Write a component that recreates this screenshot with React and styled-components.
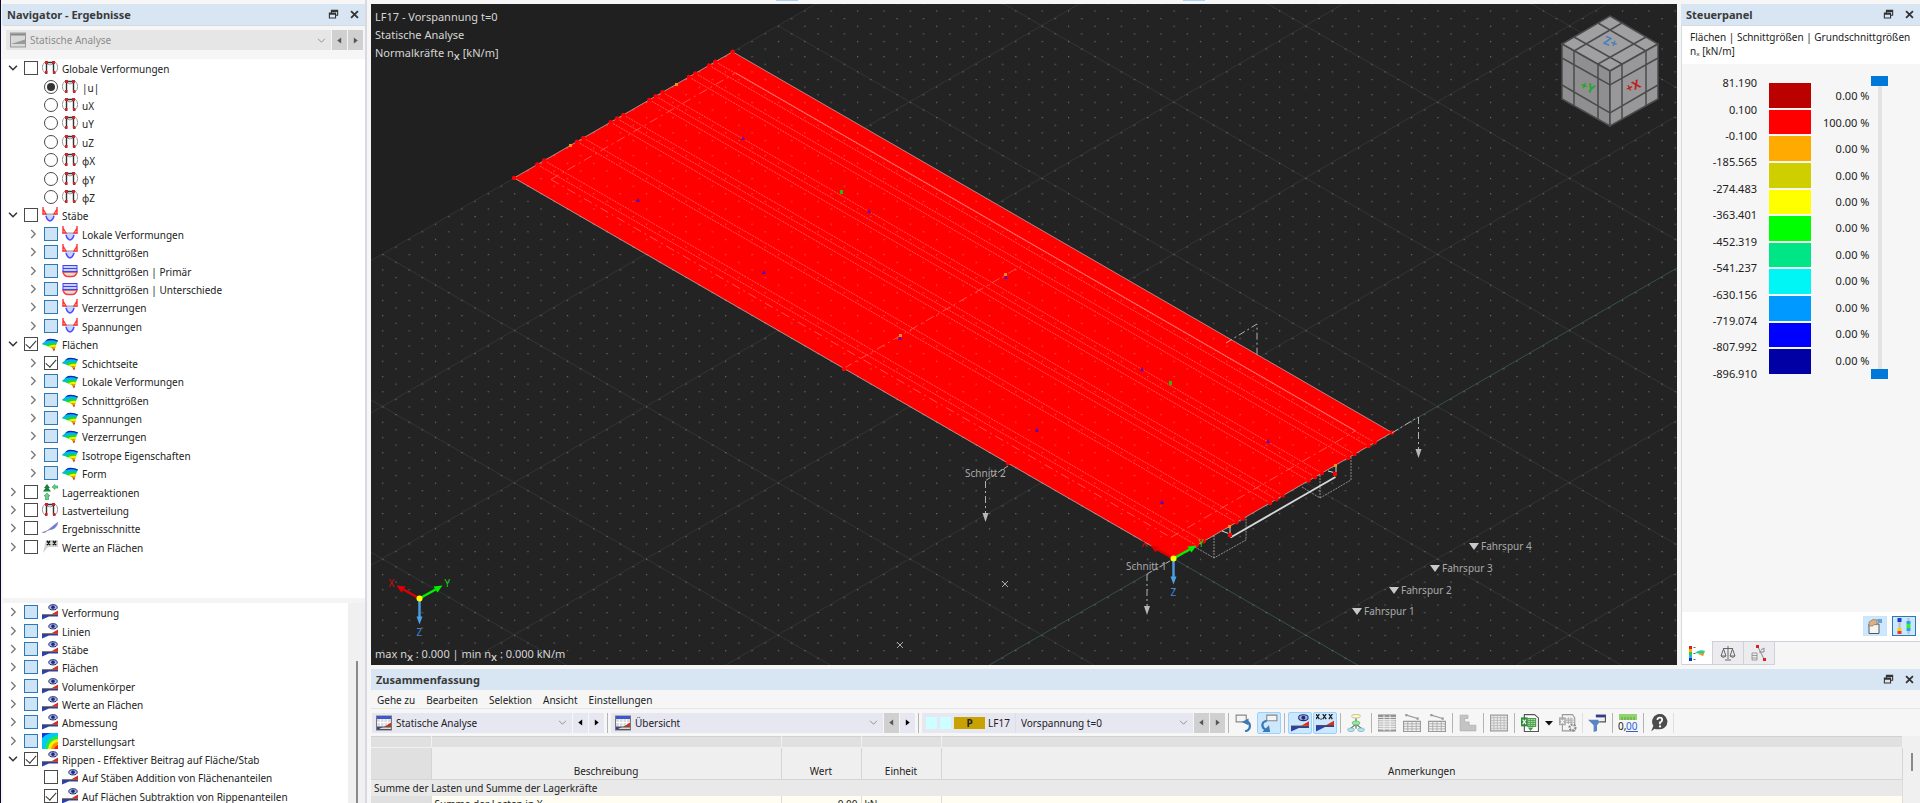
import React from "react";
import styled, { createGlobalStyle, css } from "styled-components";

const GlobalStyle = createGlobalStyle`
* {
box-sizing: border-box;
}
body {
margin: 0;
overflow: hidden;
background: #f6f6f6;
color: #222;
font-family: "Noto Sans", "Open Sans", sans-serif;
font-size: 10px;
line-height: 14px;
}
button, select, input {
font: inherit;
color: inherit;
margin: 0;
}
`;

const StyledWindow = styled.div`
display: flex;
height: 100vh;
border-left: 1px solid #0b0b2e;
`;
const StyledNavigator = styled.aside`
display: flex;
flex-direction: column;
width: 366px;
flex: none;
padding-top: 4px;
padding-left: 1px;
border-right: 2px solid #d9d9e0;
`;
const StyledMain = styled.div`
display: flex;
flex-direction: column;
flex: 1;
min-width: 0;
margin-left: 4px;
`;
const StyledTopEdge = styled.div`
display: flex;
height: 4px;
gap: 385px;
padding-left: 405px;
`;
const StyledTopTab = styled.span`
width: 22px;
height: 1px;
background: #a9d3f5;
`;
const StyledWorkRow = styled.div`
display: flex;
flex: 1;
min-height: 0;
gap: 4px;
`;
const StyledTitleBar = styled.header`
display: flex;
align-items: center;
justify-content: space-between;
flex: none;
height: 21px;
padding: 0 5px;
background: #d8e5f2;
`;
const StyledTitle = styled.h2`
margin: 0;
font-size: 11px;
line-height: 20px;
font-weight: bold;
color: #3a3a3a;
`;
const StyledTitleButtons = styled.div`
display: flex;
gap: 9px;
`;
const StyledPlainButton = styled.button`
display: flex;
align-items: center;
justify-content: center;
width: 12px;
height: 12px;
padding: 0;
border: none;
background: transparent;
`;

/* combo boxes */
const StyledComboBar = styled.div`
display: flex;
gap: 1px;
height: 34px;
flex: none;
padding: 4px 2px 10px 3px;
margin-left: 1px;
border-top: 1px solid #d9d9e0;
background: #f6f6f6;
`;
const StyledCombo = styled.label`
display: flex;
align-items: center;
gap: 4px;
flex: ${({ $width }) => ($width ? `0 0 ${$width}px` : "1")};
height: 20px;
padding: 0 4px;
background: ${({ $off }) => ($off ? "#e6e6e6" : "#e7e7f2")};
color: ${({ $off }) => ($off ? "#8c8c8c" : "#222")};
`;
const StyledSelect = styled.select`
flex: 1;
min-width: 0;
padding: 0;
border: none;
outline: none;
appearance: none;
background: transparent;
opacity: 1;
`;
const StyledStep = styled.button`
display: flex;
align-items: center;
justify-content: center;
width: 15px;
height: 20px;
padding: 0;
border: none;
color: ${({ $off }) => ($off ? "#555" : "#000")};
background: ${({ $off }) => ($off ? "#d0d0d0" : "#e7e7f2")};
`;

/* result tree */
const StyledTreeBox = styled.div`
flex: ${({ $grow }) => ($grow ? "1" : "0 0 539px")};
min-height: 0;
margin-left: 1px;
overflow: hidden;
display: flex;
background: #fff;
`;
const StyledTree = styled.ul`
display: grid;
grid-auto-rows: 1fr;
flex: 1;
height: ${({ $height }) => $height}px;
margin: 0;
padding: 0;
list-style: none;
`;
const StyledTreeRow = styled.li`
display: flex;
align-items: center;
gap: 4px;
padding-left: ${({ $level }) => 3 + $level * 20}px;
`;
const StyledTreeLabel = styled.label`
display: flex;
align-items: center;
gap: 4px;
white-space: nowrap;
`;
const StyledTreeText = styled.span`
padding-top: 2px;
`;
const StyledExpander = styled(StyledPlainButton)`
width: 14px;
height: 14px;
visibility: ${({ $hidden }) => ($hidden ? "hidden" : "visible")};
`;
const StyledSplitter = styled.div`
height: 5px;
flex: none;
background: #f4f4f4;
`;
const StyledScroll = styled.div`
width: 17px;
display: flex;
justify-content: center;
padding-top: ${({ $top }) => $top}px;
background: #f0f0f0;
`;
const StyledThumb = styled.span`
width: 2px;
height: ${({ $height }) => $height};
background: #8a8a8a;
`;
const boxBase = css`
appearance: none;
flex: none;
display: grid;
place-items: center;
width: 14px;
height: 14px;
border: 1px solid #4a4a4a;
background: #fff;
`;
const StyledCheck = styled.input`
${boxBase}
${({ $partial }) => $partial && "border-color: #2f78b7; background: #cde4f7;"}
&:checked::after {
content: "";
width: 5px;
height: 9px;
border: solid #333;
border-width: 0 1px 1px 0;
transform: translateY(-1px) rotate(42deg);
}
`;
const StyledRadio = styled.input`
${boxBase}
border-radius: 50%;
&:checked::after {
content: "";
width: 8px;
height: 8px;
border-radius: 50%;
background: #333;
}
`;

/* 3d view */
const StyledView = styled.section`
position: relative;
flex: 1;
min-width: 0;
overflow: hidden;
background: #202020;
color: #d6d6d6;
font-size: 11px;
`;
const StyledScene = styled.svg`
display: block;
width: 100%;
height: 100%;
`;
const StyledViewInfo = styled.div`
position: absolute;
top: 4px;
left: 4px;
line-height: 18px;
`;
const StyledViewRange = styled.div`
position: absolute;
bottom: 3px;
left: 4px;
line-height: 16px;
`;
const StyledSub = styled.span`
position: relative;
top: 3px;
font-weight: 500;
`;

/* control panel */
const StyledPanel = styled.aside`
display: flex;
flex-direction: column;
width: 239px;
flex: none;
`;
const StyledPanelBody = styled.div`
display: flex;
flex-direction: column;
flex: 1;
border-left: 1px solid #d9d9e0;
border-top: 1px solid #d9d9e0;
`;
const StyledPanelText = styled.p`
margin: 0;
padding: 4px 8px 6px;
background: #fff;
line-height: 14px;
white-space: nowrap;
`;
const StyledLegend = styled.div`
display: grid;
grid-template-columns: 75px 42px 42px 17px;
column-gap: 12px;
padding-top: 6px;
flex: 1;
align-content: start;
font-size: 11px;
`;
const StyledBounds = styled.ol`
display: grid;
grid-auto-rows: 1fr;
align-items: center;
justify-items: end;
height: 317px;
margin: 0;
padding: 0;
list-style: none;
white-space: nowrap;
`;
const StyledSwatches = styled(StyledBounds)`
height: 291px;
margin-top: 13px;
justify-items: stretch;
align-items: stretch;
row-gap: 2px;
`;
const StyledShares = styled(StyledBounds)`
height: 291px;
margin-top: 13px;
margin-right: 2px;
`;
const StyledSwatch = styled.li`
background: ${({ $color }) => $color};
`;
const StyledRanges = styled.div`
display: grid;
justify-items: center;
width: 17px;
height: 303px;
margin-top: 6px;
margin-left: -6px;
background: linear-gradient(#e3e3e3, #e3e3e3) center / 4px 100% no-repeat;
`;
const StyledRange = styled.input`
grid-area: 1 / 1;
appearance: none;
writing-mode: vertical-lr;
direction: rtl;
width: 17px;
height: 303px;
background: transparent;
pointer-events: none;
&::-webkit-slider-thumb {
appearance: none;
width: 17px;
height: 10px;
border: none;
background: #0078d7;
pointer-events: auto;
}
`;
const StyledPanelTools = styled.div`
display: flex;
justify-content: flex-end;
gap: 5px;
height: 29px;
padding: 4px 4px 0 0;
background: #fff;
`;
const StyledTool = styled.button`
display: flex;
align-items: center;
justify-content: center;
width: 24px;
height: ${({ $small }) => ($small ? 20 : 22)}px;
padding: 0;
border: 1px solid ${({ $edge }) => $edge || "transparent"};
border-radius: ${({ $small }) => ($small ? 0 : 2)}px;
background: ${({ $edge }) => ($edge ? "#cce8ff" : "transparent")};
`;
const StyledTabs = styled.div`
display: flex;
height: 24px;
`;
const StyledTab = styled.button`
display: flex;
align-items: center;
justify-content: center;
width: 31px;
padding: 0;
border: 1px solid #d0d0da;
border-width: ${({ $on }) => ($on ? "0 1px 1px 0" : "1px 1px 1px 0")};
background: ${({ $on }) => ($on ? "#fff" : "#ececef")};
`;
const StyledTabRest = styled.span`
flex: 1;
border-top: 1px solid #d0d0da;
`;

/* summary table */
const StyledSummary = styled.section`
flex: none;
height: 138px;
padding-top: 4px;
overflow: hidden;
`;
const StyledMenu = styled.nav`
display: flex;
gap: 11px;
height: 19px;
padding: 3px 6px;
border-bottom: 1px solid #e6e6e6;
`;
const StyledMenuButton = styled.button`
padding: 0;
border: none;
background: transparent;
line-height: 14px;
`;
const StyledToolbar = styled.div`
display: flex;
align-items: center;
gap: 1px;
height: 27px;
padding-left: 1px;
white-space: nowrap;
`;
const StyledSeparator = styled.span`
width: 1px;
height: 20px;
margin: 0 ${({ $light }) => ($light ? 1 : 2)}px;
background: ${({ $light }) => ($light ? "#dedee4" : "#b4b4b4")};
`;
const StyledCase = styled.span`
width: ${({ $wide }) => ($wide ? 31 : 11)}px;
height: 12px;
margin-right: -1px;
font-weight: bold;
line-height: 12px;
text-align: center;
background: ${({ $wide }) => ($wide ? "#c8a200" : "#ccffff")};
`;
const StyledTableRow = styled.div`
display: flex;
`;
const StyledTable = styled.table`
flex: 1;
border-collapse: collapse;
table-layout: fixed;
border-top: 1px solid #d0d0d8;
`;
const StyledHeadCell = styled.th`
height: ${({ $thin }) => ($thin ? 11 : 32)}px;
padding: 0 0 1px;
border-right: 1px solid ${({ $thin }) => ($thin ? "#f0f0f0" : "#d4d4d4")};
border-bottom: 1px solid ${({ $thin }) => ($thin ? "#f0f0f0" : "#d4d4d4")};
background: ${({ $dark }) => ($dark ? "#e0e0e0" : "#efefef")};
font-weight: normal;
vertical-align: bottom;
`;
const StyledCell = styled.td`
height: 16px;
padding: 0 3px;
line-height: 14px;
border-right: 1px solid #dcdcdc;
background: ${({ $bg }) => $bg || "#fffdf2"};
text-align: ${({ $end }) => ($end ? "right" : "left")};
`;

const EyeWedge = () => (
  <>
    <path d="M0 11h16v1.500H7l-7 3z" fill="#2b3fb5" />
    <path d="M0 10.300h16v1.200H0z" fill="#444" />
    <path d="M16 6.500v4H9z" fill="#d6301c" />
    <ellipse cx="11" cy="3.300" rx="4.200" ry="2.600" fill="#aab6e8" stroke="#243070" />
    <circle cx="11" cy="3.300" r="1.800" fill="#1c2c7c" />
  </>
);

const Book = () => (
  <>
    <rect x=".5" y="1" width="15" height="14" fill="#d9dbe0" stroke="#777" />
    <path d="M1 1h14v3H1z" fill="#3b58cf" />
    <path d="M4.500 4v8M8 4v8M11.500 4v8M1 7.500h14" stroke="#fff" />
    <path d="M1 15v-3h6z" fill="#2b3fb5" />
    <path d="M15 7.500V12H8z" fill="#d6301c" />
    <path d="M1 12h14M1 14.500h14" stroke="#555" />
  </>
);

const grid = (x, y, w, h, cols, rows) => {
  let d = "";
  for (let i = 1; i < cols; i++) d += `M${x + (w * i) / cols} ${y}v${h}`;
  for (let i = 1; i < rows; i++) d += `M${x} ${y + (h * i) / rows}h${w}`;
  return d;
};

const icons = {
  frame: (
    <>
      <path d="M3 2C-.5 5-.5 10 3 13M13 2c3.500 3 3.500 8 0 11M4 3.500q4 3 8 0" fill="none" stroke="#999" />
      <path d="M4.500 13V2.500h7V13" fill="none" stroke="#333" strokeWidth="1.400" />
      <path d="M3 1h3v3H3zM10 1h3v3h-3zM3 11h2.500v3H3zM11 11h2.500v3H11z" fill="#c8282c" />
    </>
  ),
  member: (
    <>
      <path d="M3 7h10c-1 9-9 9-10 0z" fill="#c9d3ff" />
      <path d="M4 9c2 6.500 6 6.500 8 0" fill="none" stroke="#4d4dff" strokeWidth="1.500" />
      <path d="M0 7h16" stroke="#999" />
      <path d="M1 0v7h3L1 2M15 0v7h-3l3-5" fill="none" stroke="#ff3535" strokeWidth="1.400" />
    </>
  ),
  primary: (
    <>
      <path d="M1 9q1 4.500 5 4.500h4q4 0 5-4.500z" fill="#ddd" stroke="#f04040" strokeWidth="1.500" />
      <rect x="1" y="2.500" width="14" height="6" fill="#c9d0ff" stroke="#4040f0" />
      <path d="M1 5.500h14" stroke="#4040f0" />
    </>
  ),
  surface: (
    <>
      <path d="M0 8l5-4.500Q11 2 16 4.500L14 9l-2 6-2-3-5-2z" fill="#19d832" />
      <path d="M3 5.200L6 3q5-1 10 1.500l-1 1.500Q9 4 4 6z" fill="#1424c0" />
      <path d="M0 8l4-3q6-1.500 11 .5l-.5 1.500Q8 5.800 3 9z" fill="#00b8ef" />
      <path d="M6 10.200q4-2.200 8.500-1.200l-1 2.500q-2.500-1-5 0z" fill="#f6f000" />
      <path d="M9.500 11.700q2-1 4-.5l-1 2.500h-1.500z" fill="#ff9800" />
      <path d="M11 13.200l2-.4-1 2.800z" fill="#e02010" />
    </>
  ),
  support: (
    <>
      <path d="M5 0l3 4H6.500l2.500 3.500H1L3.500 4H2z" fill="#1d7d3a" />
      <path d="M10 3l3-2.500V2h3v2h-3v1.500zM5 9l3 3H6.500v4h-3v-4H2z" fill="#5ed487" stroke="#2f9a55" strokeWidth=".6" />
    </>
  ),
  section: <path d="M0 12.500h3L16 2q-1 7-9 8z" fill="#6674f5" stroke="#888" strokeWidth=".5" />,
  values: (
    <>
      <path d="M4 1h12v7H6l-5 6z" fill="#d3d3d3" />
      <path d="M5 2l3 4M8 2L5 6M11 2l3 4M14 2l-3 4" stroke="#111" strokeWidth="1.500" />
    </>
  ),
  view: <EyeWedge />,
  plot: (
    <>
      <path d="M0 0h16v16H0z" fill="#1838e0" />
      <path d="M0 16V5Q4 1 9 0h7v16z" fill="#00c8f8" />
      <path d="M3 16Q4 4 16 3v13z" fill="#20e850" />
      <path d="M6 16q1-9 10-10v10z" fill="#f6f000" />
      <path d="M9 16q1-6 7-7v7z" fill="#ff9000" />
      <path d="M12 16q1-3 4-4v4z" fill="#f02000" />
    </>
  ),
  book: <Book />,
  bookOff: (
    <>
      <rect x=".5" y="1" width="15" height="14" fill="#d8d8d8" stroke="#999" />
      <path d="M1 2.500h14" stroke="#888" strokeWidth="2" />
      <path d="M1 15v-3l14-4.500V12H1z" fill="#9a9a9a" />
    </>
  ),
  right: <path d="M6 3.500L10.500 8 6 12.500" fill="none" stroke="#777" strokeWidth="1.500" />,
  down: <path d="M3.500 5.500L8 10l4.500-4.500" fill="none" stroke="#333" strokeWidth="1.800" />,
  chevron: <path d="M3 5.500L8 10.500l5-5" fill="none" stroke="#888" strokeWidth="1.300" />,
  prev: <path d="M11 2.500v11L4 8z" fill="currentColor" />,
  next: <path d="M5 2.500v11L12 8z" fill="currentColor" />,
  caret: <path d="M0 4h16l-8 9z" fill="#111" />,
  restore: (
    <path d="M5 5V2h9v7h-3M2 6h9v7H2zM2 7.500h9M5 3.500h9" fill="none" stroke="#333" strokeWidth="1.600" />
  ),
  close: <path d="M3 3l10 10M13 3L3 13" stroke="#333" strokeWidth="2.600" />,
  outArrow: (
    <>
      <path d="M1 1h9v6H1z" fill="#f4f4f4" stroke="#888" />
      <path d="M9 15.500c6-2 5-8 1-9" fill="none" stroke="#3c78b4" strokeWidth="2" />
      <path d="M6 7l6-3v6z" fill="#3c78b4" />
    </>
  ),
  inArrow: (
    <>
      <path d="M6 1h9v5H6z" fill="#f4f4f4" stroke="#888" />
      <path d="M6 6C1 7 1 12 5 14" fill="none" stroke="#3c78b4" strokeWidth="2" />
      <path d="M2 16h7l-1-6z" fill="#3c78b4" />
    </>
  ),
  numbers: (
    <>
      <path d="M0 0l3 4.500M3 0L0 4.500M6 0l3 4.500M9 0L6 4.500M11.500 0l3 4.500M14.500 0l-3 4.500" stroke="#222" strokeWidth="1.200" />
      <path d="M4 4h1v1H4z" />
      <path d="M0 15.500V10h16v1.500H8z" fill="#2b3fb5" />
      <path d="M16 6v4.500H8z" fill="#d6301c" />
      <path d="M0 10.500h16" stroke="#444" />
    </>
  ),
  tree: (
    <>
      <path d="M8 3v10M8 9l-5 4M8 9l5 4" stroke="#666" />
      <ellipse cx="8" cy="2" rx="4" ry="1.700" fill="#fff6cc" stroke="#b5a978" strokeWidth=".6" />
      <ellipse cx="8" cy="8" rx="3.500" ry="1.800" fill="#8fec9a" stroke="#4bb85a" strokeWidth=".6" />
      <ellipse cx="3.500" cy="14" rx="3" ry="1.600" fill="#b6e6f2" stroke="#6ba7b8" strokeWidth=".6" />
      <ellipse cx="12.500" cy="14" rx="3" ry="1.600" fill="#b6e6f2" stroke="#6ba7b8" strokeWidth=".6" />
    </>
  ),
  table: (
    <>
      <path d="M0 1h16v14H0z" fill="#c4c4c4" stroke="#888" />
      <path d="M0 1h16v3.500H0z" fill="#8f8f8f" />
      <path d={grid(0, 1, 16, 14, 3, 7)} stroke="#f4f4f4" strokeWidth=".8" />
    </>
  ),
  tableLine: (
    <>
      <path d="M.5 6.500h15v9H.5z" fill="#f2f2f2" stroke="#999" />
      <path d={grid(0.5, 6.5, 15, 9, 4, 4)} stroke="#aaa" strokeWidth=".8" />
      <path d="M3 1l10 3" stroke="#999" />
      <path d="M2 0h2v2H2zM12 3h2v2h-2z" fill="#999" />
    </>
  ),
  bars: <path d="M1 1h7v3H5v3h4v3h6v5H1z" fill="#c4c4c4" stroke="#aaa" strokeWidth=".6" />,
  sheet: (
    <>
      <path d="M.5 1h15v14H.5z" fill="#ededed" stroke="#999" />
      <path d={grid(0.5, 1, 15, 14, 5, 6)} stroke="#b8b8b8" strokeWidth=".8" />
    </>
  ),
  excel: (
    <>
      <path d="M3 .5h9l3.500 3V15.500H3z" fill="#fff" stroke="#555" />
      <path d="M0 3h6v8H0z" fill="#2f8a3a" />
      <path d="M1.500 5l3 4M4.500 5l-3 4" stroke="#fff" />
      <path d="M6 4h7v7H6z" fill="#b9e2b5" stroke="#4e9e4a" />
      <path d={grid(6, 4, 7, 7, 3, 4)} stroke="#4e9e4a" strokeWidth=".8" />
      <path d="M6 12h5l-2.500 3z" fill="#3ba045" />
    </>
  ),
  excelOff: (
    <>
      <path d="M3 .5h9l2 3V15H3z" fill="#f4f4f4" stroke="#999" />
      <path d="M0 3h6v7H0z" fill="#aaa" />
      <path d="M1.500 5l3 3.500M4.500 5l-3 3.500" stroke="#fff" />
      <path d={grid(6, 3, 7, 6, 3, 4)} stroke="#aaa" strokeWidth=".8" />
      <circle cx="12" cy="12" r="2.600" fill="#eee" stroke="#888" strokeWidth="2" strokeDasharray="1.600 1" />
    </>
  ),
  filter: (
    <>
      <path d="M0 5h12l-4 5v5l-3 1v-6z" fill="#5b84c4" />
      <path d="M7 1h8.500v6H10" fill="#eee" stroke="#555" />
      <path d="M7 1h8.500v2H7z" fill="#243c9a" />
    </>
  ),
  help: (
    <>
      <path d="M1 15.500l2-5A6.800 6.800 0 118 13.500q-3 .3-4-.5z" fill="#4c4c4c" />
      <path d="M6.500 5.200q.3-2 2.300-2t2 1.800-1.900 2.500V9" fill="none" stroke="#fff" strokeWidth="1.600" />
      <circle cx="8.900" cy="11" r="1" fill="#fff" />
    </>
  ),
  hand: (
    <>
      <path d="M2 6h10v9.500H2z" fill="#f4f4f4" stroke="#555" />
      <path d="M2 8V4q4-4 8-2v5q-3-2-4 1z" fill="#d9b28a" stroke="#8a6a48" strokeWidth=".6" />
      <path d="M10 1h5v4h-4z" fill="#6d9fd2" />
    </>
  ),
  sliders: (
    <>
      <path d="M2.500 0h2v16h-2zM11.500 0h2v16h-2z" fill="#bbb" />
      <path d="M1.500 0h4v4h-4z" fill="#1b3fc4" />
      <path d="M1.500 10h4v3h-4z" fill="#ffcc00" />
      <path d="M1.500 13h4v3h-4z" fill="#e33" />
      <path d="M10.500 3h4v3h-4zM10.500 10h4v3h-4z" fill="#26a6e8" />
      <path d="M10.500 6h4v4h-4z" fill="#3bea3b" />
    </>
  ),
  scaleTab: (
    <>
      <path d="M0 1h3v3H0z" fill="#e02020" />
      <path d="M0 4h3v3H0z" fill="#ffb000" />
      <path d="M0 7h3v3H0z" fill="#28d228" />
      <path d="M0 10h3v3H0z" fill="#20b8e8" />
      <path d="M0 13h3v3H0z" fill="#1830c8" />
      <path d="M4.500 2.500h2M4.500 8.500h2M4.500 14.500h2" stroke="#666" />
      <path d="M6 8q4-4 10-2l-2 5q-3-3-8-3z" fill="#20d0a0" />
      <path d="M9 9q3-1 6-1l-1 3z" fill="#ff9800" />
    </>
  ),
  balance: (
    <path d="M8 1v13M3 3.500h10M5 15h6M3.500 4L1 11h5zM12.500 4L10 11h5zM1 11q2.500 3 5 0M10 11q2.500 3 5 0" fill="none" stroke="#666" />
  ),
  measure: (
    <>
      <path d="M1 8h5v7H1zM1 10.500h5M1 13h5" fill="#eee" stroke="#888" strokeWidth=".8" />
      <path d="M7 2l6 12M8 7h5V3l-3 2" fill="none" stroke="#888" />
      <path d="M5 0h3v3H5zM12 13h3v3h-3z" fill="#e02020" />
    </>
  ),
};

const Icon = ({ name, size = 16 }) => (
  <svg width={size} height={size} viewBox="0 0 16 16" aria-hidden="true">
    {icons[name]}
  </svg>
);

const DecimalIcon = () => (
  <svg width="20" height="20" viewBox="0 0 20 20" aria-hidden="true">
    <path d="M1 1h18v6H1z" fill="#92d36e" />
    <path d="M4 4v3M7 4v3M10 4v3M13 4v3M16 4v3" stroke="#5c9c40" />
    <text x="0" y="17" fontSize="10" fill="#222">0,</text>
    <text x="8" y="17" fontSize="10" fill="#2f62d8">00</text>
    <path d="M8 18.500h12" stroke="#2f62d8" />
  </svg>
);

// level, control, icon, label, open
const results = [
  [0, "off", "frame", "Globale Verformungen", true],
  [1, "radio-on", "frame", "|u|"],
  [1, "radio", "frame", "uX"],
  [1, "radio", "frame", "uY"],
  [1, "radio", "frame", "uZ"],
  [1, "radio", "frame", "φX"],
  [1, "radio", "frame", "φY"],
  [1, "radio", "frame", "φZ"],
  [0, "off", "member", "Stäbe", true],
  [1, "partial", "member", "Lokale Verformungen", false],
  [1, "partial", "member", "Schnittgrößen", false],
  [1, "partial", "primary", "Schnittgrößen | Primär", false],
  [1, "partial", "primary", "Schnittgrößen | Unterschiede", false],
  [1, "partial", "member", "Verzerrungen", false],
  [1, "partial", "member", "Spannungen", false],
  [0, "on", "surface", "Flächen", true],
  [1, "on", "surface", "Schichtseite", false],
  [1, "partial", "surface", "Lokale Verformungen", false],
  [1, "partial", "surface", "Schnittgrößen", false],
  [1, "partial", "surface", "Spannungen", false],
  [1, "partial", "surface", "Verzerrungen", false],
  [1, "partial", "surface", "Isotrope Eigenschaften", false],
  [1, "partial", "surface", "Form", false],
  [0, "off", "support", "Lagerreaktionen", false],
  [0, "off", "frame", "Lastverteilung", false],
  [0, "off", "section", "Ergebnisschnitte", false],
  [0, "off", "values", "Werte an Flächen", false],
];
const display = [
  [0, "partial", "view", "Verformung", false],
  [0, "partial", "view", "Linien", false],
  [0, "partial", "view", "Stäbe", false],
  [0, "partial", "view", "Flächen", false],
  [0, "partial", "view", "Volumenkörper", false],
  [0, "partial", "view", "Werte an Flächen", false],
  [0, "partial", "view", "Abmessung", false],
  [0, "partial", "plot", "Darstellungsart", false],
  [0, "on", "view", "Rippen - Effektiver Beitrag auf Fläche/Stab", true],
  [1, "off", "view", "Auf Stäben Addition von Flächenanteilen"],
  [1, "on", "view", "Auf Flächen Subtraktion von Rippenanteilen"],
];

const legend = [
  ["#bb0000", "0.00 %"],
  ["#ff0000", "100.00 %"],
  ["#ffaa00", "0.00 %"],
  ["#cfcf00", "0.00 %"],
  ["#ffff00", "0.00 %"],
  ["#00ff00", "0.00 %"],
  ["#00e687", "0.00 %"],
  ["#00f5f5", "0.00 %"],
  ["#0099ff", "0.00 %"],
  ["#0000ff", "0.00 %"],
  ["#0000a5", "0.00 %"],
];
const bounds = [
  "81.190", "0.100", "-0.100", "-185.565", "-274.483", "-363.401",
  "-452.319", "-541.237", "-630.156", "-719.074", "-807.992", "-896.910",
];

const Tree = ({ rows, height, name }) => (
  <StyledTree $height={height}>
    {rows.map(([level, control, icon, label, open], i) => (
      <StyledTreeRow key={i} $level={level}>
        <StyledExpander $hidden={open === undefined} aria-label={`${label} aufklappen`}>
          <Icon name={open ? "down" : "right"} size={14} />
        </StyledExpander>
        <StyledTreeLabel>
          {control.startsWith("radio") ? (
            <StyledRadio type="radio" name={name} defaultChecked={control === "radio-on"} />
          ) : (
            <StyledCheck
              type="checkbox"
              defaultChecked={control === "on"}
              $partial={control === "partial"}
            />
          )}
          <Icon name={icon} />
          <StyledTreeText>{label}</StyledTreeText>
        </StyledTreeLabel>
      </StyledTreeRow>
    ))}
  </StyledTree>
);

const TitleBar = ({ title }) => (
  <StyledTitleBar>
    <StyledTitle>{title}</StyledTitle>
    <StyledTitleButtons>
      <StyledPlainButton aria-label="Abdocken"><Icon name="restore" size={11} /></StyledPlainButton>
      <StyledPlainButton aria-label="Schließen"><Icon name="close" size={11} /></StyledPlainButton>
    </StyledTitleButtons>
  </StyledTitleBar>
);

const Combo = ({ value, label, icon, width, off, children }) => (
  <StyledCombo $width={width} $off={off}>
    {icon && <Icon name={icon} />}
    {children}
    <StyledSelect aria-label={label} disabled={off}>
      <option>{value}</option>
    </StyledSelect>
    <Icon name="chevron" size={11} />
  </StyledCombo>
);

const Steps = ({ prevOff, nextOff }) => (
  <>
    <StyledStep $off={prevOff} aria-label="Zurück"><Icon name="prev" size={9} /></StyledStep>
    <StyledStep $off={nextOff} aria-label="Weiter"><Icon name="next" size={9} /></StyledStep>
  </>
);

// isometric frame: model origin and one major grid step along each axis
const OX = 1173.5;
const OY = 558.7;
const GX = 131.88;
const GY = 76.15;
const at = (m, n) => [OX + (m + n) * GX, OY + (m - n) * GY];
const seg = (m1, n1, m2, n2) => `M${at(m1, n1).join(" ")}L${at(m2, n2).join(" ")}`;
const range = (a, b) => Array.from({ length: b - a + 1 }, (_, i) => a + i);
const WIDTH = 1.657;
const ribs = [0.106, 0.138, 0.288, 0.317, 0.442, 0.471, 0.5, 0.619, 0.648, 0.679, 0.8, 0.829, 0.892, 0.921];

const sections = [
  [985.5, 481, "Schnitt 2", 965, 477],
  [1147, 574, "Schnitt 1", 1126, 570],
  [1418.5, 417],
];
const lanes = [
  ["Fahrspur 1", 1357, 611],
  ["Fahrspur 2", 1394, 590],
  ["Fahrspur 3", 1435, 568],
  ["Fahrspur 4", 1474, 546],
];
const nodes = [
  [743, 138], [638, 200], [869, 211], [764, 272], [1006, 277], [900, 338],
  [1142, 369], [1037, 430], [1268, 441], [1162, 502],
];

const Triad = ({ x, y, redX }) => (
  <g transform={`translate(${x} ${y})`} fontSize="10">
    <path d="M0 0L-16-9" stroke="#e00000" strokeWidth="2.500" />
    <path d="M-23-13l9 1-4 6z" fill="#e00000" />
    <path d="M0 0L16-9" stroke="#00f000" strokeWidth="2.500" />
    <path d="M23-13l-9 1 4 6z" fill="#00f000" />
    <path d="M0 0v19" stroke="#4b9be0" strokeWidth="2.500" />
    <path d="M-3 18h6l-3 8z" fill="#4ba3e6" />
    <circle r="3" fill="#ffff00" />
    <text x={redX} y="-12" fill="#d01010">X</text>
    <text x="25" y="-12" fill="#10d010">Y</text>
    <text x="-3" y="37" fill="#4583cf">Z</text>
  </g>
);

const Cube = () => (
  <g stroke="#4b4b4b" strokeWidth="1.500">
    <path d="M1610 16l48 28-48 27-48-27z" fill="#a0a0a3" />
    <path d="M1562 44l48 27v55l-48-27z" fill="#8f8f91" />
    <path d="M1658 44l-48 27v55l48-27z" fill="#98989a" />
    <path
      d="M1598 23l48 28v55M1574 37l48 27v55M1622 23l-48 28v55M1646 37l-48 27v55M1562 58l48 27 48-27M1562 85l48 28 48-28"
      fill="none"
    />
    <g stroke="none" fontSize="12" fontWeight="bold" textAnchor="middle">
      <text transform="translate(1609 46) rotate(22)" fill="#4a80b8">Z+</text>
      <text transform="translate(1586 91) rotate(22)" fill="#20a828">+Y</text>
      <text transform="translate(1635 90) rotate(-26)" fill="#c01c1c">+X</text>
    </g>
  </g>
);

const Scene = () => (
  <StyledScene viewBox="371 4 1306 661" preserveAspectRatio="xMidYMid slice">
    <defs>
      <pattern id="dots" x={OX} y={OY} width={GX / 5} height={GY / 5} patternUnits="userSpaceOnUse">
        <path d="M0 0h1.200v1.200H0zM13.200 7.600h1.200v1.200h-1.200z" fill="#b4bcb8" />
      </pattern>
    </defs>
    <path d={`${seg(-5, -6, -5, 8)}L2000 -400V900H-60z`} fill="#232323" />
    {range(-5, 6).map((m) => (
      <path key={m} d={seg(m, -8, m, 8)} stroke={m === 0 ? "#35504e" : "#313534"} />
    ))}
    {range(-7, 7).map((n) => (
      <path key={n} d={seg(-5, n, 8, n)} stroke={n === 0 ? "#35504e" : "#313534"} />
    ))}

    <path
      d={`M${at(-5, 0)}L${at(-5, WIDTH)}L${at(0, WIDTH)}L${at(0, 0)}z`}
      fill="#f00"
      stroke="#c7a0a0"
      strokeWidth=".8"
    />
    <g stroke="#ff6666" strokeWidth=".8" strokeDasharray="2 1">
      {ribs.map((t) => (
        <path key={t} d={seg(-5, t * WIDTH, 0, t * WIDTH)} />
      ))}
    </g>
    <g stroke="#ff6060" fill="none" strokeWidth=".8" strokeDasharray="9 4 2 4">
      <path d={seg(-4.85, 0.13, -0.15, 0.13)} />
      <path d={seg(-4.85, 1.53, -0.15, 1.53)} strokeDasharray="none" stroke="#ff8080" />
      <path d={seg(-4.85, 0.13, -4.85, 1.53)} />
      <path d={seg(-0.15, 0.13, -0.15, 1.53)} />
      <path d={seg(-2.5, 0, -2.5, 1.36)} />
    </g>
    <path d={`${seg(-5, -6, -5, 8)}L2000 -400V900H-60z`} fill="url(#dots)" opacity=".5" />

    <g fill="#f00">
      {[0, ...ribs, 1].map((t) => (
        <React.Fragment key={t}>
          <circle cx={at(-5, t * WIDTH)[0]} cy={at(-5, t * WIDTH)[1]} r="2.200" />
          <circle cx={at(0, t * WIDTH)[0]} cy={at(0, t * WIDTH)[1]} r="2.200" />
        </React.Fragment>
      ))}
      <circle cx="844" cy="369" r="2.200" />
      <circle cx="1008" cy="463" r="2.200" />
    </g>
    <g fill="#5a00b8">
      {nodes.map(([x, y]) => (
        <path key={x} d={`M${x} ${y - 2}l2 4h-4z`} />
      ))}
    </g>
    <path d="M840 190h3v4h-3zM1169 381h3v4h-3z" fill="#20c000" />
    <path d="M569 144h3v3h-3zM675 83h3v3h-3zM1004 273h3v3h-3zM899 334h3v3h-3z" fill="#ff8c1a" />

    <g fill="none" stroke="#a9a9a9" strokeWidth=".8" strokeDasharray="2 1">
      <path d="M1195 547l19 11 32-18v-23M1214 558v-23" />
      <path d="M1302 487l18 11 31-18v-24M1320 498v-23" />
    </g>
    <path d="M1230.500 537.500L1335.500 477" stroke="#d8d8d8" strokeWidth="1.800" />
    <path d="M1222 531l8 3v-8M1328 471l8 2v-8" stroke="#ddd" fill="none" />
    <path d="M1228 525h3v3h-3zM1334 464h3v3h-3z" fill="#ff8c1a" />
    <path d="M1228 533h4v4h-4zM1333 472h4v4h-4z" fill="#f00" />

    <g fill="none" stroke="#b0b0b0" strokeDasharray="7 3 2 3">
      <path d="M1226 343l31-19v31" />
      <path d="M1392 433l26-16" />
      <path d="M1008 466l-23 15M1170 561l-23 13" strokeDasharray="5 2" />
    </g>
    {sections.map(([x, y, label, tx, ty]) => (
      <g key={x} fill="#b9b9b9">
        <path d={`M${x} ${y}v32`} stroke="#b0b0b0" strokeDasharray="7 3 2 3" />
        <path d={`M${x - 3} ${y + 32}h6l-3 9z`} />
        {label && <text x={tx} y={ty} fontSize="10" fill="#a9a9a9">{label}</text>}
      </g>
    ))}
    {lanes.map(([label, x, y]) => (
      <g key={label}>
        <path d={`M${x - 5} ${y - 3}h10l-5 7z`} fill="#c9c9c9" />
        <text x={x + 7} y={y + 4} fontSize="10" fill="#a9a9a9">{label}</text>
      </g>
    ))}
    <path d="M1002 581l6 6m0-6l-6 6M897 642l6 6m0-6l-6 6" stroke="#a9a9a9" />
    <Triad x={1173.5} y={558.5} redX={-32} />
    <Triad x={419.5} y={598.5} redX={-31} />
    <Cube />
  </StyledScene>
);

const Navigator = () => (
  <StyledNavigator>
    <TitleBar title="Navigator - Ergebnisse" />
    <StyledComboBar>
      <Combo value="Statische Analyse" label="Analyseart" icon="bookOff" off />
      <Steps prevOff nextOff />
    </StyledComboBar>
    <StyledTreeBox>
      <Tree rows={results} height={497} name="deformation" />
    </StyledTreeBox>
    <StyledSplitter />
    <StyledTreeBox $grow>
      <Tree rows={display} height={202} name="display" />
      <StyledScroll $top={58}>
        <StyledThumb $height="100%" />
      </StyledScroll>
    </StyledTreeBox>
  </StyledNavigator>
);

const ControlPanel = () => (
  <StyledPanel>
    <TitleBar title="Steuerpanel" />
    <StyledPanelBody>
      <StyledPanelText>
        Flächen | Schnittgrößen | Grundschnittgrößen
        <br />
        nₓ [kN/m]
      </StyledPanelText>
      <StyledLegend>
        <StyledBounds>
          {bounds.map((b) => <li key={b}>{b}</li>)}
        </StyledBounds>
        <StyledSwatches>
          {legend.map(([color]) => <StyledSwatch key={color} $color={color} />)}
        </StyledSwatches>
        <StyledShares>
          {legend.map(([color, share]) => <li key={color}>{share}</li>)}
        </StyledShares>
        <StyledRanges>
          <StyledRange type="range" defaultValue="100" aria-label="Obere Grenze" />
          <StyledRange type="range" defaultValue="0" aria-label="Untere Grenze" />
        </StyledRanges>
      </StyledLegend>
      <StyledPanelTools>
        <StyledTool $small $edge="#cce4f7" aria-label="Optionen"><Icon name="hand" /></StyledTool>
        <StyledTool $small $edge="#2f78b7" aria-label="Skala"><Icon name="sliders" /></StyledTool>
      </StyledPanelTools>
      <StyledTabs>
        <StyledTab $on aria-label="Farbskala"><Icon name="scaleTab" /></StyledTab>
        <StyledTab aria-label="Faktoren"><Icon name="balance" /></StyledTab>
        <StyledTab aria-label="Filter"><Icon name="measure" /></StyledTab>
        <StyledTabRest />
      </StyledTabs>
    </StyledPanelBody>
  </StyledPanel>
);

const Tool = ({ name, label, on, size = 18 }) => (
  <StyledTool $edge={on && "#99d1ff"} aria-label={label}>
    <Icon name={name} size={size} />
  </StyledTool>
);

const Summary = () => (
  <StyledSummary>
    <TitleBar title="Zusammenfassung" />
    <StyledMenu>
      {["Gehe zu", "Bearbeiten", "Selektion", "Ansicht", "Einstellungen"].map((m) => (
        <StyledMenuButton key={m}>{m}</StyledMenuButton>
      ))}
    </StyledMenu>
    <StyledToolbar>
      <Combo value="Statische Analyse" label="Analyse" icon="book" width={200} />
      <Steps />
      <StyledSeparator />
      <Combo value="Übersicht" label="Tabelle" icon="book" width={272} />
      <Steps prevOff />
      <StyledSeparator />
      <Combo value="Vorspannung t=0" label="Lastfall" width={271}>
        <StyledCase />
        <StyledCase />
        <StyledCase $wide>P</StyledCase>
        <span>LF17</span>
        <StyledSeparator $light />
      </Combo>
      <Steps prevOff nextOff />
      <StyledSeparator />
      <Tool name="outArrow" label="Auswahl aus Modell" />
      <Tool name="inArrow" label="Auswahl im Modell" on />
      <StyledSeparator />
      <Tool name="view" label="Ergebnisse anzeigen" on />
      <Tool name="numbers" label="Werte anzeigen" on />
      <StyledSeparator />
      <Tool name="tree" label="Struktur" />
      <StyledSeparator />
      <Tool name="table" label="Tabelle" />
      <Tool name="tableLine" label="Tabelle nach Linien" />
      <Tool name="tableLine" label="Tabelle nach Stäben" />
      <StyledSeparator />
      <Tool name="bars" label="Diagramm" />
      <StyledSeparator />
      <Tool name="sheet" label="Raster" />
      <StyledSeparator />
      <Tool name="excel" label="Excel-Export" />
      <StyledPlainButton aria-label="Export wählen"><Icon name="caret" size={8} /></StyledPlainButton>
      <Tool name="excelOff" label="Export-Einstellungen" />
      <StyledSeparator $light />
      <Tool name="filter" label="Filter" />
      <StyledSeparator />
      <StyledTool aria-label="Dezimalstellen"><DecimalIcon /></StyledTool>
      <StyledSeparator />
      <Tool name="help" label="Hilfe" />
      <StyledSeparator $light />
    </StyledToolbar>
    <StyledTableRow>
      <StyledTable>
        <colgroup>
          <col width="60" />
          <col width="350" />
          <col width="80" />
          <col width="80" />
          <col />
        </colgroup>
        <thead>
          <tr>
            {range(1, 5).map((c) => <StyledHeadCell key={c} as="td" $thin $dark />)}
          </tr>
          <tr>
            <StyledHeadCell as="td" $dark />
            <StyledHeadCell>Beschreibung</StyledHeadCell>
            <StyledHeadCell>Wert</StyledHeadCell>
            <StyledHeadCell>Einheit</StyledHeadCell>
            <StyledHeadCell>Anmerkungen</StyledHeadCell>
          </tr>
        </thead>
        <tbody>
          <tr>
            <StyledCell colSpan="5" $bg="#e9e9e9">Summe der Lasten und Summe der Lagerkräfte</StyledCell>
          </tr>
          <tr>
            <StyledCell $bg="#e0e0e0" />
            <StyledCell>Summe der Lasten in X</StyledCell>
            <StyledCell $end>0.00</StyledCell>
            <StyledCell>kN</StyledCell>
            <StyledCell />
          </tr>
        </tbody>
      </StyledTable>
      <StyledScroll $top={17}>
        <StyledThumb $height="18px" />
      </StyledScroll>
    </StyledTableRow>
  </StyledSummary>
);

const App = () => (
  <>
    <GlobalStyle />
    <StyledWindow>
      <Navigator />
      <StyledMain>
        <StyledTopEdge>
          <StyledTopTab />
          <StyledTopTab />
        </StyledTopEdge>
        <StyledWorkRow>
          <StyledView>
            <Scene />
            <StyledViewInfo>
              LF17 - Vorspannung t=0
              <br />
              Statische Analyse
              <br />
              Normalkräfte n<StyledSub>x</StyledSub> [kN/m]
            </StyledViewInfo>
            <StyledViewRange>
              max n<StyledSub>x</StyledSub> : 0.000 | min n<StyledSub>x</StyledSub> : 0.000 kN/m
            </StyledViewRange>
          </StyledView>
          <ControlPanel />
        </StyledWorkRow>
        <Summary />
      </StyledMain>
    </StyledWindow>
  </>
);

export default App;
